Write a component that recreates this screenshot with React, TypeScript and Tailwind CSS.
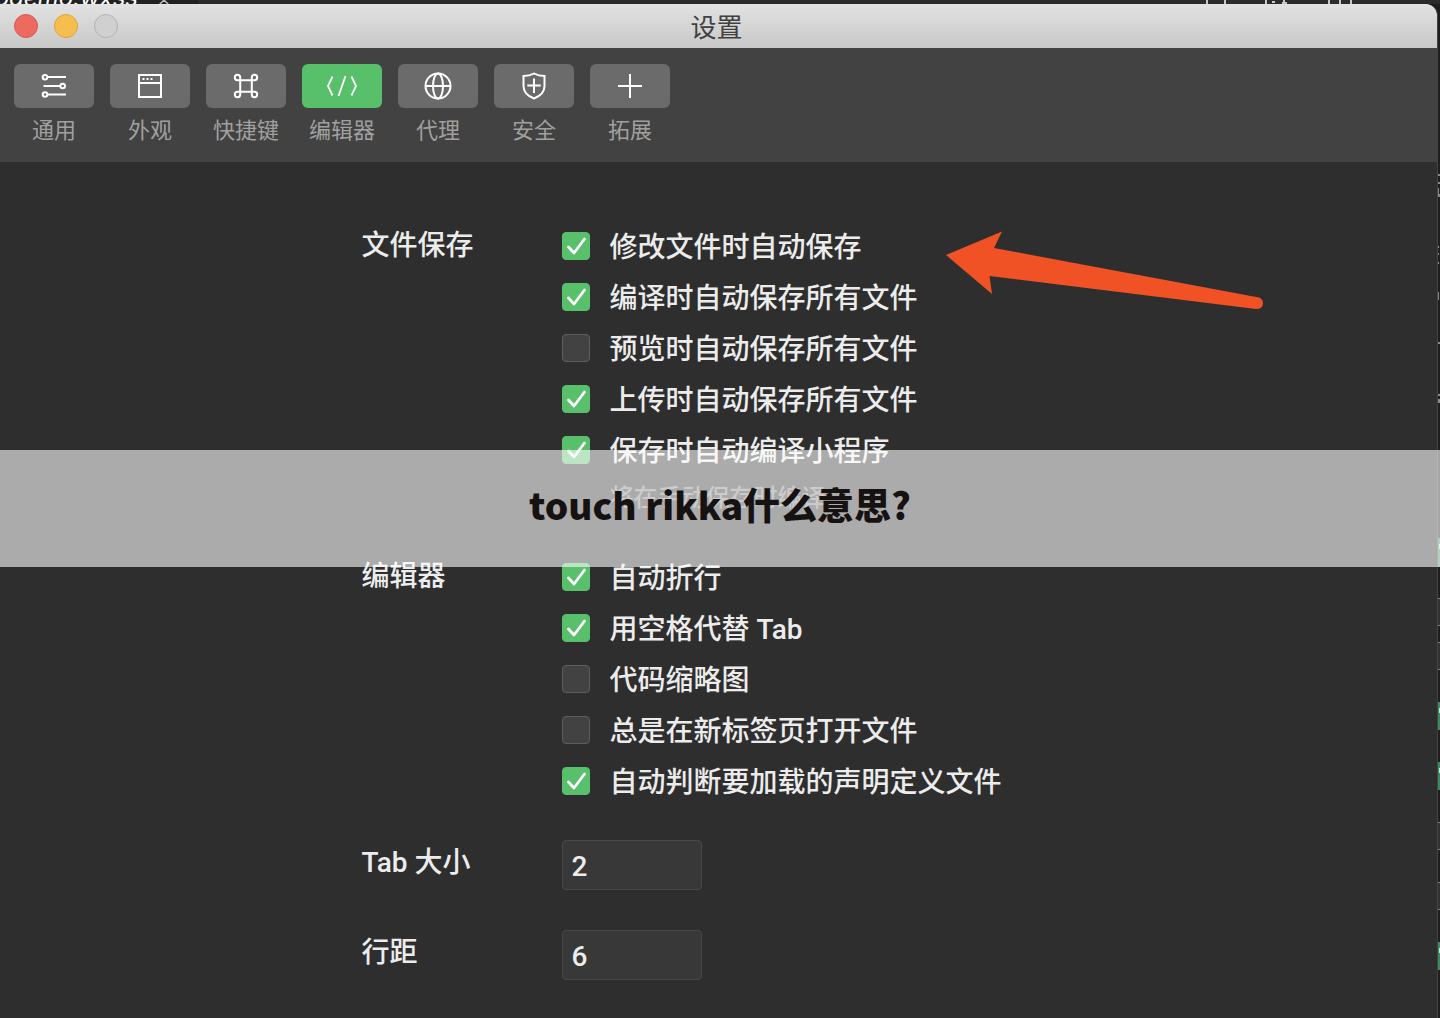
import { useState } from "react";
import type { ReactNode } from "react";

type Option = { id: string; label: string; checked: boolean };

const saveOptions: Option[] = [
  { id: "autosave", label: "修改文件时自动保存", checked: true },
  { id: "save-compile", label: "编译时自动保存所有文件", checked: true },
  { id: "save-preview", label: "预览时自动保存所有文件", checked: false },
  { id: "save-upload", label: "上传时自动保存所有文件", checked: true },
  { id: "compile-save", label: "保存时自动编译小程序", checked: true },
];

const editorOptions: Option[] = [
  { id: "wrap", label: "自动折行", checked: true },
  { id: "spaces", label: "用空格代替 Tab", checked: true },
  { id: "minimap", label: "代码缩略图", checked: false },
  { id: "new-tab", label: "总是在新标签页打开文件", checked: false },
  { id: "typings", label: "自动判断要加载的声明定义文件", checked: true },
];

const tabs: { name: string; icon: ReactNode }[] = [
  {
    name: "通用",
    icon: (
      <>
        <path d="M7.5 5H26M3.5 14H20M7.5 22.5H26" />
        <circle cx="5" cy="5.3" r="2.3" />
        <circle cx="22.7" cy="14" r="2.3" />
        <circle cx="5" cy="22.5" r="2.3" />
      </>
    ),
  },
  {
    name: "外观",
    icon: (
      <>
        <path d="M3 3H25V25H3ZM3 11H25" />
        <path d="M6.5 7H8.5M10.5 7H12.5M14.5 7H16.5" />
      </>
    ),
  },
  {
    name: "快捷键",
    icon: (
      <path d="M8.2 8.2V19.8M19.8 8.2V19.8M8.2 8.2H19.8M8.2 19.8H19.8M8.2 8.2H5.4A2.7 2.7 0 1 1 8.2 5.4ZM19.8 8.2V5.4A2.7 2.7 0 1 1 22.6 8.2ZM8.2 19.8V22.6A2.7 2.7 0 1 1 5.4 19.8ZM19.8 19.8H22.6A2.7 2.7 0 1 1 19.8 22.6Z" />
    ),
  },
  {
    name: "编辑器",
    icon: <path strokeWidth="1.8" d="M4.5 4.5L0 14L4.5 23.5M17.5 4L10.5 24M23.5 4.5L28 14L23.5 23.5" />,
  },
  {
    name: "代理",
    icon: (
      <>
        <circle cx="14" cy="14" r="12.5" />
        <ellipse cx="14" cy="14" rx="5" ry="12.5" />
        <path d="M1.5 14H26.5" />
      </>
    ),
  },
  {
    name: "安全",
    icon: (
      <>
        <path d="M14 1.5C17 3.2 20.5 4 24.5 4V14C24.5 20.5 20.5 24 14 26.5C7.5 24 3.5 20.5 3.5 14V4C7.5 4 11 3.2 14 1.5Z" />
        <path d="M14 6.5V21M7.3 13.5H20.7" />
      </>
    ),
  },
  { name: "拓展", icon: <path d="M14 2V26M2 14H26" /> },
];

function CheckRow({ option }: { option: Option }) {
  return (
    <div className="flex h-[51px] items-center gap-5">
      <span className="grid size-7 shrink-0">
        <input
          id={option.id}
          type="checkbox"
          defaultChecked={option.checked}
          className="peer col-start-1 row-start-1 size-7 appearance-none rounded border border-[#5e5e5e] bg-[#424242] checked:border-[#58bf6b] checked:bg-[#58bf6b]"
        />
        <svg
          viewBox="0 0 28 28"
          className="pointer-events-none invisible col-start-1 row-start-1 size-7 peer-checked:visible"
          fill="none"
          stroke="white"
          strokeWidth="2.8"
          strokeLinecap="round"
          strokeLinejoin="round"
        >
          <path d="M6.5 15L12 21L22.5 7" />
        </svg>
      </span>
      <label htmlFor={option.id} className="pt-1">
        {option.label}
      </label>
    </div>
  );
}

function Section({ title, children }: { title: string; children: ReactNode }) {
  return (
    <section className="flex">
      <h2 className="h-12 w-[200px] shrink-0 leading-[52px]">{title}</h2>
      <div>{children}</div>
    </section>
  );
}

function NumberField({ id, label, value }: { id: string; label: string; value: string }) {
  return (
    <div className="flex">
      <label htmlFor={id} className="w-[200px] shrink-0 leading-[46px]">
        {label}
      </label>
      <input
        id={id}
        type="text"
        defaultValue={value}
        className="h-[50px] w-[140px] rounded border border-[#484848] bg-[#383838] px-[9px] pt-0.5 outline-none"
      />
    </div>
  );
}

// Bits of the editor window that stick out on the right
function BackEdge() {
  return (
    <svg className="w-0.5 shrink-0 bg-[#1e1e1e]" viewBox="0 0 2 1014" preserveAspectRatio="xMinYMin slice">
      <path
        d="M0 170H2V172H0ZM0 178H2V180H0ZM0 184H1V191H0ZM0 190H2V193H0ZM0 242H1V244H0ZM0 249H1V251H0ZM0 258H1V260H0ZM0 288H1V296H0ZM0 338H2V340H0ZM0 390H2V392H0ZM0 395H2V399H0Z"
        fill="#8a8a8a"
      />
      <path d="M0 594H2V622H0ZM0 638H2V665H0ZM0 818H2V845H0ZM0 878H2V905H0Z" fill="#333" />
      <path
        d="M0 594H2V595H0ZM0 621H2V622H0ZM0 638H2V639H0ZM0 665H2V666H0ZM0 818H2V819H0ZM0 845H2V846H0ZM0 878H2V879H0ZM0 905H2V906H0Z"
        fill="#858585"
      />
      <path d="M0 534H2V563H0ZM0 698H2V726H0ZM0 758H2V786H0ZM0 938H2V966H0Z" fill="#3f8a5c" />
      <path d="M1 540H2V545H1ZM1 704H2V709H1ZM1 764H2V769H1ZM1 944H2V949H1Z" fill="#c8e6d0" />
    </svg>
  );
}

function App() {
  const [active, setActive] = useState("编辑器");

  return (
    <div className="relative flex min-h-screen flex-col overflow-hidden bg-[#2b2b2b] font-['Roboto','Noto_Sans_CJK_SC',sans-serif] text-[#ececec]">
      {/* Editor tab behind the settings window */}
      <div className="flex h-1 items-end justify-between overflow-hidden">
        <div className="flex h-1 w-[198px] items-end bg-[#222]">
          <span className="flex w-[138px] justify-end font-['Inter',sans-serif] text-2xl leading-[12px] text-white italic">
            pdemo.wxss
          </span>
          <svg className="ml-[18px] h-1 w-4" viewBox="0 0 16 4" stroke="#bbb" strokeWidth="1.5">
            <path d="M3 5L8 0L13 5" fill="none" />
          </svg>
        </div>
        <svg className="mr-[84px] h-1 w-[150px]" viewBox="0 0 150 4" fill="none" stroke="#c8c8c8" strokeWidth="2">
          <path d="M1 0V4M19 0V4M60 0V4M78 0V4M123 0V4M134 0V4M145 0V4M66 2H69M76 3H81" />
        </svg>
      </div>

      <div className="flex flex-1 bg-[#1e1e1e]">
        <main className="flex-1 overflow-hidden rounded-tr-xl border-r border-[#444] bg-[#2e2e2e]">
          <header className="flex h-11 items-center bg-linear-to-b from-[#e2e2e2] to-[#c8c8c8] px-3.5">
            <div className="flex gap-4">
              <button aria-label="关闭" className="size-6 rounded-full border border-[#d6584f] bg-[#ed6a5f]" />
              <button aria-label="最小化" className="size-6 rounded-full border border-[#dba53c] bg-[#f6be4f]" />
              <button aria-label="缩放" className="size-6 rounded-full border border-[#b3b3b3] bg-[#d0d0d0]" />
            </div>
            <h1 className="flex-1 pt-1 pr-[108px] text-center text-[26px] text-[#404040]">设置</h1>
          </header>

          <nav className="flex gap-4 bg-[#424242] px-3.5 pt-4 pb-[18px]">
            {tabs.map((tab) => (
              <button
                key={tab.name}
                onClick={() => setActive(tab.name)}
                className="flex w-20 flex-col items-center gap-2.5 text-[22px] leading-[26px] text-[#a0a0a0]"
              >
                <span
                  className={`flex h-11 w-full items-center justify-center rounded-md ${
                    tab.name === active ? "bg-[#58bf6b]" : "bg-[#6b6b6b]"
                  }`}
                >
                  <svg
                    viewBox="0 0 28 28"
                    className="size-7 overflow-visible"
                    fill="none"
                    stroke="white"
                    strokeWidth="2"
                  >
                    {tab.icon}
                  </svg>
                </span>
                {tab.name}
              </button>
            ))}
          </nav>

          <div className="mx-auto max-w-[714px] pt-[58px] pb-8 text-[28px] font-medium">
            <Section title="文件保存">
              {saveOptions.map((option) => (
                <CheckRow key={option.id} option={option} />
              ))}
              <p className="pb-[30px] pl-12 text-2xl leading-[46px] text-[#808080]">将在手动保存时编译</p>
            </Section>
            <Section title="编辑器">
              {editorOptions.map((option) => (
                <CheckRow key={option.id} option={option} />
              ))}
            </Section>
            <div className="mt-[34px] flex flex-col gap-10">
              <NumberField id="tab-size" label="Tab 大小" value="2" />
              <NumberField id="line-gap" label="行距" value="6" />
            </div>
          </div>
        </main>
        <BackEdge />
      </div>

      {/* Arrow pointing at the autosave option */}
      <svg
        className="pointer-events-none absolute top-[230px] left-[945px] h-20 w-80"
        viewBox="0 0 320 80"
        fill="#f05225"
      >
        <path d="M1 25L57 1.5L49 18L314 67.5Q318 69 318 73Q318 79 311 79L44.5 46L47 64Z" />
      </svg>

      <div className="absolute inset-x-0 top-[450px] flex h-[117px] items-center justify-center bg-white/60 pb-2">
        <p className="font-['Noto_Sans_CJK_SC',sans-serif] text-[37px] font-black text-[#171212]">
          touch rikka什么意思?
        </p>
      </div>
    </div>
  );
}

export default App;
